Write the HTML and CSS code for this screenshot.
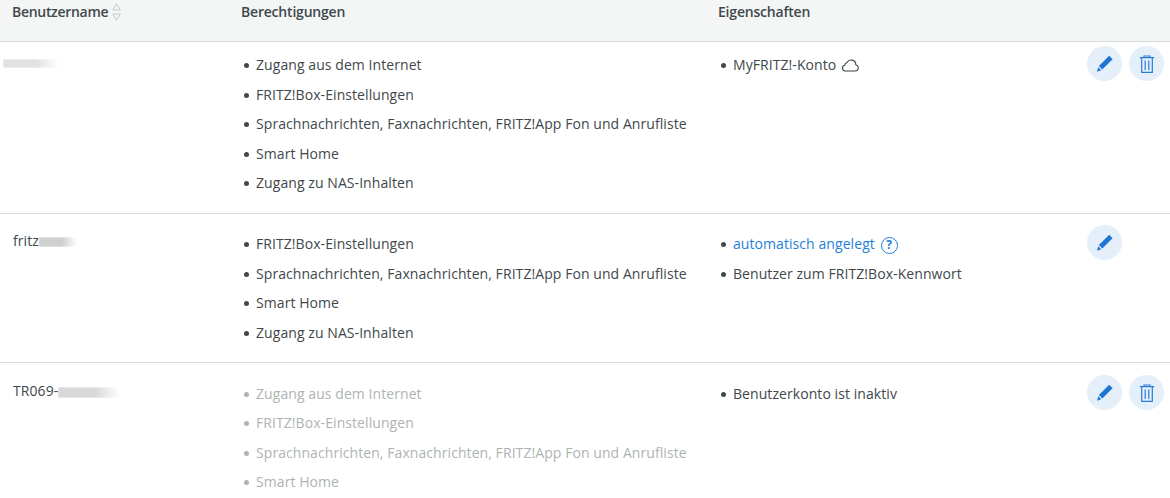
FILE: index.html
```html
<!DOCTYPE html>
<html lang="de">
<head>
    <meta charset="UTF-8">
    <title>Benutzer</title>
    <link rel="stylesheet" href="styles.css">
</head>
<body>
    <div class="user-table">
        <!-- Kopfzeile -->
        <div class="row head">
            <div class="col-name">Benutzername
                <svg class="sort" width="9" height="18" viewBox="0 0 9 18"><path d="M4.500 .8 L8.300 7 H.7 Z M.7 11 H8.300 L4.500 17.200 Z" fill="none" stroke="#c4c8c8" stroke-width="1"/></svg>
            </div>
            <div class="col-perm">Berechtigungen</div>
            <div class="col-prop">Eigenschaften</div>
            <div class="col-btn"></div>
        </div>

        <div class="row user first">
            <div class="col-name"><span class="blur blur-a"></span></div>
            <ul class="col-perm">
                <li>Zugang aus dem Internet</li>
                <li>FRITZ!Box-Einstellungen</li>
                <li>Sprachnachrichten, Faxnachrichten, FRITZ!App Fon und Anrufliste</li>
                <li>Smart Home</li>
                <li>Zugang zu NAS-Inhalten</li>
            </ul>
            <ul class="col-prop">
                <li>MyFRITZ!-Konto
                    <svg class="cloud" width="18" height="13" viewBox="0 0 18 13"><path d="M4 12 H14 a3.200 3.200 0 0 0 .8 -6.300 A4.700 4.700 0 0 0 6 3.400 A3.200 3.200 0 0 0 3.800 6.300 A2.900 2.900 0 0 0 4 12 Z" fill="none" stroke="#3d4548" stroke-width="1.100"/></svg>
                </li>
            </ul>
            <div class="col-btn">
                <button class="round"><svg width="18" height="18" viewBox="0 0 18 18"><use href="#pen"/></svg></button>
                <button class="round"><svg width="18" height="20" viewBox="0 0 18 20"><use href="#bin"/></svg></button>
            </div>
        </div>

        <div class="row user second">
            <div class="col-name">fritz<span class="blur blur-b"></span></div>
            <ul class="col-perm">
                <li>FRITZ!Box-Einstellungen</li>
                <li>Sprachnachrichten, Faxnachrichten, FRITZ!App Fon und Anrufliste</li>
                <li>Smart Home</li>
                <li>Zugang zu NAS-Inhalten</li>
            </ul>
            <ul class="col-prop">
                <li><a href="#">automatisch angelegt</a>
                    <span class="help">?</span>
                </li>
                <li>Benutzer zum FRITZ!Box-Kennwort</li>
            </ul>
            <div class="col-btn">
                <button class="round"><svg width="18" height="18" viewBox="0 0 18 18"><use href="#pen"/></svg></button>
            </div>
        </div>

        <div class="row user third">
            <div class="col-name">TR069-<span class="blur blur-c"></span></div>
            <ul class="col-perm inactive">
                <li>Zugang aus dem Internet</li>
                <li>FRITZ!Box-Einstellungen</li>
                <li>Sprachnachrichten, Faxnachrichten, FRITZ!App Fon und Anrufliste</li>
                <li>Smart Home</li>
            </ul>
            <ul class="col-prop">
                <li>Benutzerkonto ist inaktiv</li>
            </ul>
            <div class="col-btn">
                <button class="round"><svg width="18" height="18" viewBox="0 0 18 18"><use href="#pen"/></svg></button>
                <button class="round"><svg width="18" height="20" viewBox="0 0 18 20"><use href="#bin"/></svg></button>
            </div>
        </div>
    </div>

    <svg class="defs" width="0" height="0">
        <symbol id="pen" viewBox="0 0 18 18">
            <path d="M13.200 .8 L16.600 4.200 L6.300 14.500 L2.900 11.100 Z" fill="#1f74d4"/>
            <path d="M2.300 12.300 L5.200 15.200 L1 16.800 Z" fill="#1f74d4"/>
        </symbol>
        <symbol id="bin" viewBox="0 0 18 20">
            <path d="M1.800 3.700 H16.200 M6 3.500 V2 H12 V3.500 M3.700 4 V18.300 H14.300 V4 M7.200 6.500 V16 M10.800 6.500 V16" fill="none" stroke="#2a7cd8" stroke-width="1.200"/>
        </symbol>
    </svg>
</body>
</html>
```

FILE: styles.css
```css
html, body { height: 498px; overflow: hidden; }
body {
    margin: 0;
    font-family: "Open Sans", sans-serif;
    font-size: 14px;
    letter-spacing: 0.07px;
    color: #40484c;
    background: #fff;
}
.defs { display: block; }

.row {
    display: grid;
    grid-template-columns: 229px 477px 1fr 76px;
    padding-left: 12px;
    padding-right: 7px;
}
.head {
    height: 41px;
    background: #f4f6f6;
    border-bottom: 1px solid #d6d9d9;
    font-weight: 600;
    line-height: 23px;
    letter-spacing: -0.2px;
}
.head .col-name { display: flex; align-items: flex-start; gap: 4px; letter-spacing: -0.3px; }
.sort { margin-top: 3px; }

.user { border-bottom: 1px solid #d6d9d9; height: 148px; }
.user.first { height: 171px; }
.user.third { height: 135px; border-bottom: none; }
.user > .col-name { padding: 16px 0 0 1px; line-height: 22px; }
.user.third > .col-name { padding-top: 17px; }
.user.first > .col-name { padding-top: 10px; }

ul { list-style: none; margin: 0; padding: 15px 0 0 0; }
.third ul { padding-top: 15.500px; }
.first ul { padding-top: 8px; }
li {
    position: relative;
    padding-left: 15px;
    height: 29.5px;
    line-height: 29.5px;
    white-space: nowrap;
}
li::before {
    content: "";
    position: absolute;
    left: 3px;
    top: 13px;
    width: 5px;
    height: 5px;
    border-radius: 50%;
    background: #40484c;
}
.inactive li { color: #aeb3b4; }
.inactive li::before { background: #aeb3b4; }

a { color: #1f7fd8; text-decoration: none; }
.cloud { vertical-align: -2px; margin-left: 1px; }
.help {
    display: inline-block;
    box-sizing: border-box;
    width: 17px;
    height: 17px;
    margin-left: 2px;
    border: 1.5px solid #1f7fd8;
    border-radius: 50%;
    color: #1f7fd8;
    font-size: 12px;
    font-weight: 700;
    line-height: 14px;
    text-align: center;
    letter-spacing: 0;
}

.col-btn { display: flex; gap: 7px; padding-top: 11px; align-items: flex-start; }
.third .col-btn { padding-top: 12px; }
.first .col-btn { padding-top: 4px; }
.round {
    flex: none;
    width: 35px;
    height: 35px;
    padding: 0;
    border: none;
    border-radius: 50%;
    background: #e4eff9;
    display: flex;
    align-items: center;
    justify-content: center;
}

/* unkenntlich gemachte Namen */
.blur {
    display: inline-block;
    filter: blur(1px);
    background: repeating-linear-gradient(90deg, #a4a8a9 0 1.500px, #e2e3e4 1.500px 3px);
    -webkit-mask-image: linear-gradient(90deg, #000 60%, transparent);
    mask-image: linear-gradient(90deg, #000 60%, transparent);
}
.blur-a { width: 56px; height: 9px; margin-left: -10px; opacity: .6; }
.blur-b { width: 38px; height: 10px; vertical-align: -1px; }
.blur-c { width: 62px; height: 11px; vertical-align: -2px; opacity: .8; }
```
